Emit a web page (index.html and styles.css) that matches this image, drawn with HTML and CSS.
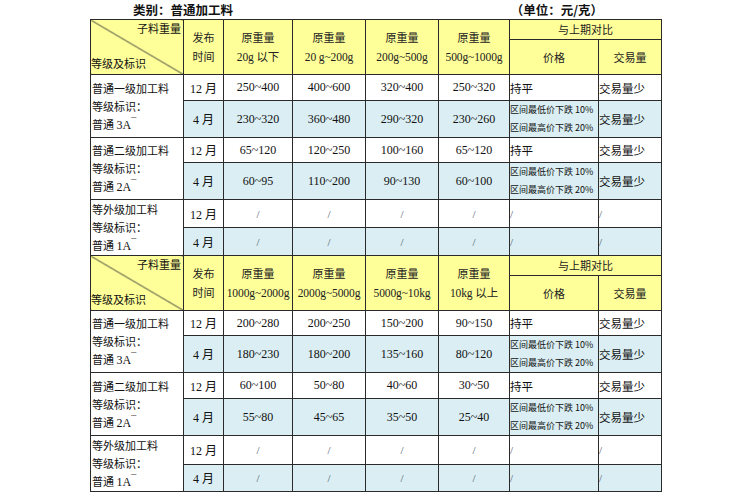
FILE: index.html
```html
<!DOCTYPE html>
<html lang="zh">
<head>
<meta charset="utf-8">
<link rel="stylesheet" href="styles.css">
</head>
<body>
<div class="page">
  <div class="caption">
    <span class="cat">类别：普通加工料</span>
    <span class="unit">（单位：元/克）</span>
  </div>
  <table class="price">
    <colgroup>
      <col class="c1"><col class="c2"><col class="c3"><col class="c4"><col class="c5"><col class="c6"><col class="c7"><col class="c8">
    </colgroup>
    <tbody>
      <tr class="h1">
        <td rowspan="2" class="diag"><div class="dt">子料重量</div><div class="db">等级及标识</div></td>
        <td rowspan="2" class="hd">发布<br>时间</td>
        <td rowspan="2" class="hd">原重量<br><span class="hn">20g 以下</span></td>
        <td rowspan="2" class="hd">原重量<br><span class="hn">20 g~200g</span></td>
        <td rowspan="2" class="hd">原重量<br><span class="hn">200g~500g</span></td>
        <td rowspan="2" class="hd">原重量<br><span class="hn">500g~1000g</span></td>
        <td colspan="2" class="hd">与上期对比</td>
      </tr>
      <tr class="h2">
        <td class="hd">价格</td>
        <td class="hd">交易量</td>
      </tr>

      <tr class="r12">
        <td rowspan="2" class="grade">普通一级加工料<br>等级标识：<br>普通 <span class="num">3A<sup>¯</sup></span></td>
        <td class="m">12 月</td><td class="n">250~400</td><td class="n">400~600</td><td class="n">320~400</td><td class="n">250~320</td>
        <td class="t">持平</td><td class="t">交易量少</td>
      </tr>
      <tr class="r4">
        <td class="m">4 月</td><td class="n">230~320</td><td class="n">360~480</td><td class="n">290~320</td><td class="n">230~260</td>
        <td class="s">区间最低价下跌 10%<br>区间最高价下跌 20%</td><td class="t">交易量少</td>
      </tr>
      <tr class="r12b">
        <td rowspan="2" class="grade">普通二级加工料<br>等级标识：<br>普通 <span class="num">2A<sup>¯</sup></span></td>
        <td class="m">12 月</td><td class="n">65~120</td><td class="n">120~250</td><td class="n">100~160</td><td class="n">65~120</td>
        <td class="t">持平</td><td class="t">交易量少</td>
      </tr>
      <tr class="r4">
        <td class="m">4 月</td><td class="n">60~95</td><td class="n">110~200</td><td class="n">90~130</td><td class="n">60~100</td>
        <td class="s">区间最低价下跌 10%<br>区间最高价下跌 20%</td><td class="t">交易量少</td>
      </tr>
      <tr class="rs">
        <td rowspan="2" class="grade">等外级加工料<br>等级标识：<br>普通 <span class="num">1A<sup>¯</sup></span></td>
        <td class="m">12 月</td><td class="n sl">/</td><td class="n sl">/</td><td class="n sl">/</td><td class="n sl">/</td>
        <td class="t sl">/</td><td class="t sl">/</td>
      </tr>
      <tr class="rs blue">
        <td class="m">4 月</td><td class="n sl">/</td><td class="n sl">/</td><td class="n sl">/</td><td class="n sl">/</td>
        <td class="t sl">/</td><td class="t sl">/</td>
      </tr>

      <tr class="h1b">
        <td rowspan="2" class="diag"><div class="dt">子料重量</div><div class="db">等级及标识</div></td>
        <td rowspan="2" class="hd">发布<br>时间</td>
        <td rowspan="2" class="hd">原重量<br><span class="hn">1000g~2000g</span></td>
        <td rowspan="2" class="hd">原重量<br><span class="hn">2000g~5000g</span></td>
        <td rowspan="2" class="hd">原重量<br><span class="hn">5000g~10kg</span></td>
        <td rowspan="2" class="hd">原重量<br><span class="hn">10kg 以上</span></td>
        <td colspan="2" class="hd">与上期对比</td>
      </tr>
      <tr class="h2">
        <td class="hd">价格</td>
        <td class="hd">交易量</td>
      </tr>

      <tr class="r12x">
        <td rowspan="2" class="grade">普通一级加工料<br>等级标识：<br>普通 <span class="num">3A<sup>¯</sup></span></td>
        <td class="m">12 月</td><td class="n">200~280</td><td class="n">200~250</td><td class="n">150~200</td><td class="n">90~150</td>
        <td class="t">持平</td><td class="t">交易量少</td>
      </tr>
      <tr class="r4">
        <td class="m">4 月</td><td class="n">180~230</td><td class="n">180~200</td><td class="n">135~160</td><td class="n">80~120</td>
        <td class="s">区间最低价下跌 10%<br>区间最高价下跌 20%</td><td class="t">交易量少</td>
      </tr>
      <tr class="r12">
        <td rowspan="2" class="grade">普通二级加工料<br>等级标识：<br>普通 <span class="num">2A<sup>¯</sup></span></td>
        <td class="m">12 月</td><td class="n">60~100</td><td class="n">50~80</td><td class="n">40~60</td><td class="n">30~50</td>
        <td class="t">持平</td><td class="t">交易量少</td>
      </tr>
      <tr class="r4">
        <td class="m">4 月</td><td class="n">55~80</td><td class="n">45~65</td><td class="n">35~50</td><td class="n">25~40</td>
        <td class="s">区间最低价下跌 10%<br>区间最高价下跌 20%</td><td class="t">交易量少</td>
      </tr>
      <tr class="rs">
        <td rowspan="2" class="grade">等外级加工料<br>等级标识：<br>普通 <span class="num">1A<sup>¯</sup></span></td>
        <td class="m">12 月</td><td class="n sl">/</td><td class="n sl">/</td><td class="n sl">/</td><td class="n sl">/</td>
        <td class="t sl">/</td><td class="t sl">/</td>
      </tr>
      <tr class="rsl blue">
        <td class="m">4 月</td><td class="n sl">/</td><td class="n sl">/</td><td class="n sl">/</td><td class="n sl">/</td>
        <td class="t sl">/</td><td class="t sl">/</td>
      </tr>
    </tbody>
  </table>
</div>
</body>
</html>
```

FILE: styles.css
```css
html, body {
  margin: 0;
  padding: 0;
  background: #ffffff;
}
body {
  font-family: "Liberation Serif", "Noto Sans CJK SC", serif;
  color: #111;
}
.page {
  width: 571px;
  margin-left: 90px;
}
.caption {
  height: 19px;
  display: flex;
  justify-content: space-between;
  align-items: center;
  font-family: "Noto Sans CJK SC", sans-serif;
  font-weight: bold;
  font-size: 12.5px;
  line-height: 19px;
  padding: 0 58px 0 43px;
}
table.price {
  border-collapse: collapse;
  table-layout: fixed;
  width: 571px;
  font-family: "Noto Sans CJK SC", sans-serif;
  font-size: 11px;
}
col.c1 { width: 93px; }
col.c2 { width: 40px; }
col.c3 { width: 69px; }
col.c4 { width: 73px; }
col.c5 { width: 73px; }
col.c6 { width: 71px; }
col.c7 { width: 89px; }
col.c8 { width: 63px; }

table.price td {
  border: 1px solid #2a2a2a;
  padding: 0;
  text-align: center;
  vertical-align: middle;
  overflow: hidden;
  white-space: nowrap;
}
.num {
  font-family: "Liberation Serif", serif;
  font-size: 12px;
}
.hn {
  font-family: "Liberation Serif", "Noto Sans CJK SC", serif;
  font-size: 11.5px;
  letter-spacing: -0.1px;
}
sup {
  font-size: 10px;
  line-height: 0;
  vertical-align: 4px;
}
.h1 td, .h1b td, .h2 td {
  background: #ffff99;
}
.h1 { height: 17px; }
.h1b { height: 17px; }
.h2 { height: 35px; }
.hd {
  line-height: 19px;
  color: #222;
}
.diag {
  background: linear-gradient(to top right, transparent calc(50% - 0.8px), #333 50%, transparent calc(50% + 0.8px)), #ffff99 !important;
  vertical-align: top !important;
  padding: 0 !important;
  line-height: 17px;
}
.dt {
  text-align: right;
  padding-right: 2px;
}
.db {
  text-align: left;
  padding-top: 18px;
}
.r12 { height: 26px; }
.r12b { height: 25px; }
.r12x { height: 25px; }
.r4 { height: 36px; }
.rs { height: 27px; }
.rsl { height: 26px; }
.r4 td, .blue td {
  background: #daeef3;
}
table.price td.grade {
  background: #ffffff;
  text-align: left;
  line-height: 18px;
  padding-left: 1px;
}
.m {
  font-family: "Liberation Serif", "Noto Sans CJK SC", serif;
  font-size: 12px;
}
.n {
  font-family: "Liberation Serif", serif;
  font-size: 12px;
}
table.price td.t {
  text-align: left;
  font-size: 11.5px;
}
table.price td.s {
  text-align: left;
  font-size: 9px;
  line-height: 18px;
}
.sl {
  color: #4a5566;
  font-family: "Liberation Serif", serif;
  font-size: 11px;
}
table.price td.t.sl {
  font-size: 11px;
}
```
